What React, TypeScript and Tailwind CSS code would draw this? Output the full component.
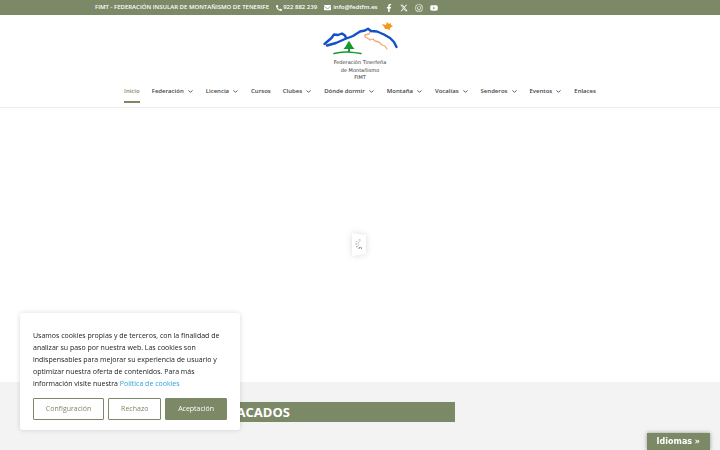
import { ChevronDown } from "lucide-react";
import { FaEnvelope, FaFacebookF, FaInstagram, FaPhoneAlt, FaYoutube } from "react-icons/fa";
import { FaXTwitter } from "react-icons/fa6";

const navLinks = [
  { name: "Inicio", href: "#inicio", active: true },
  { name: "Federación", href: "#federacion", menu: true },
  { name: "Licencia", href: "#licencia", menu: true },
  { name: "Cursos", href: "#cursos" },
  { name: "Clubes", href: "#clubes", menu: true },
  { name: "Dónde dormir", href: "#donde-dormir", menu: true },
  { name: "Montaña", href: "#montana", menu: true },
  { name: "Vocalías", href: "#vocalias", menu: true },
  { name: "Senderos", href: "#senderos", menu: true },
  { name: "Eventos", href: "#eventos", menu: true },
  { name: "Enlaces", href: "#enlaces" },
];

const socials = [
  { name: "Facebook", icon: FaFacebookF },
  { name: "X", icon: FaXTwitter },
  { name: "Instagram", icon: FaInstagram },
  { name: "YouTube", icon: FaYoutube },
];

function TopBar() {
  return (
    <div className="bg-[#7c8967] text-white">
      <div className="mx-auto flex h-[15px] w-full max-w-[530px] items-center text-[6px] leading-[15px] font-semibold whitespace-nowrap">
        <span>FIMT - FEDERACIÓN INSULAR DE MONTAÑISMO DE TENERIFE</span>
        <a href="tel:922882239" className="ml-[7px] flex items-center gap-px">
          <FaPhoneAlt size={6} />
          922 882 239
        </a>
        <a href="mailto:info@fedtfm.es" className="ml-[7px] flex items-center gap-0.5">
          <FaEnvelope size={7} />
          info@fedtfm.es
        </a>
        <div className="ml-[7px] flex items-center gap-[7px]">
          {socials.map((s) => (
            <a key={s.name} href="#social" aria-label={s.name}>
              <s.icon size={8} />
            </a>
          ))}
        </div>
      </div>
    </div>
  );
}

function Logo() {
  return (
    <svg viewBox="0 0 80 62" className="h-[62px] w-20" fill="none" strokeLinecap="round" strokeLinejoin="round" role="img" aria-label="Federación Tinerfeña de Montañismo">
      {/* sol */}
      <path d="M62 5l4 1 1-3 2 2 2-1 0 2 2 1-3 2 0 2-3-1-2 0-1-2z" fill="#f39a1e" />
      {/* barranco */}
      <path d="M50 13l-1 2-4 1 0 2 4 2 1 1 3-1 2 2 4 1 3 3 3 1 2 3" stroke="#efa878" strokeWidth="1.3" />
      {/* montañas */}
      <path d="M4.500 25l7-6 2.500-3.500 4 .5 4-1.500 3 2 1 2.500M7 26.500l9-2.500 9-4 8-3 7-4.500 5-1 3-1.700 3 2.200 6 .5 7 3 6 3.500 4 4 2.500 5" stroke="#1450c8" strokeWidth="2.400" />
      {/* pino */}
      <path d="M29 22l2 2.500h-.7l2 2h-.7l3 3.500h-4.600v3h-2v-3h-4.600l3-3.500h-.7l2-2H27z" fill="#159a2c" />
      <path d="M14 34.500q7-2 14-1.500t13 1.500" stroke="#159a2c" strokeWidth="1.500" />
      <g fill="#333" fontFamily="'DejaVu Sans', sans-serif" fontSize="5" textAnchor="middle">
        <text x="40" y="45">Federación Tinerfeña</text>
        <text x="40" y="53">de Montañismo</text>
        <text x="40" y="60">FIMT</text>
      </g>
    </svg>
  );
}

function Header() {
  return (
    <header className="flex flex-col items-center border-b border-[#ececec] bg-white pt-1 pb-1">
      <a href="#inicio">
        <Logo />
      </a>
      <nav className="flex gap-3 pt-1 text-[6px] font-semibold whitespace-nowrap text-[#444]">
        {navLinks.map((link) => (
          <a
            key={link.name}
            href={link.href}
            className={`flex h-[18px] items-start gap-[3px] border-b-2 leading-[13px] ${
              link.active ? "border-[#7c8967] text-[#7c8967]" : "border-transparent"
            }`}
          >
            {link.name}
            {link.menu && <ChevronDown size={7} strokeWidth={3} className="mt-[3px]" />}
          </a>
        ))}
      </nav>
    </header>
  );
}

function Loader() {
  return (
    <svg viewBox="0 0 17 24" className="h-6 w-[17px] drop-shadow-[0_0_3px_rgba(0,0,0,0.15)]" fill="none" strokeLinecap="round" role="img" aria-label="Cargando">
      <path d="M0 0l14 2v19l-14 2z" fill="#fff" />
      <g stroke="#777">
        <path d="M7 7l1-.3" opacity=".5" />
        <path d="M4.500 8.300l.6.600" opacity=".6" />
        <path d="M3.700 11h.9" opacity=".7" />
        <path d="M4.600 13.800l.7-.5" />
        <path d="M7 15.600l.3-1.200" />
        <path d="M9.500 15.500l-.6-1.200" />
        <path d="M8.500 7.500q-3 1-2 5" stroke="#bbb" strokeWidth=".6" />
      </g>
    </svg>
  );
}

function CookieNotice() {
  return (
    <section
      aria-label="Aviso de cookies"
      className="fixed bottom-5 left-5 w-[220px] rounded-[3px] bg-white px-[13px] pt-[17px] pb-[10px] shadow-[0_0_5px_rgba(0,0,0,0.15)]"
    >
      <p className="text-[7px] leading-3 text-[#212121]">
        Usamos cookies propias y de terceros, con la finalidad de analizar su paso por nuestra web. Las cookies son
        indispensables para mejorar su experiencia de usuario y optimizar nuestra oferta de contenidos. Para más
        información visite nuestra{" "}
        <a href="#cookies" className="text-[#2ea3d8]">
          Política de cookies
        </a>
      </p>
      <div className="mt-2 flex gap-1 text-[7px] leading-[20px] text-[#7c8967]">
        <button className="grow rounded-[1px] border border-[#7c8967] px-[11px]">Configuración</button>
        <button className="grow rounded-[1px] border border-[#7c8967] px-[11px]">Rechazo</button>
        <button className="grow rounded-[1px] border border-[#7c8967] bg-[#7c8967] px-[11px] text-white">Aceptación</button>
      </div>
    </section>
  );
}

export default function App() {
  return (
    <div className="flex min-h-screen flex-col bg-white font-['Open_Sans',sans-serif]">
      <TopBar />
      <Header />
      <main className="flex grow flex-col">
        <div className="flex grow items-center justify-center">
          <Loader />
        </div>
        <section className="bg-[#f3f3f3] pt-5 pb-7">
          <div className="mx-auto w-full max-w-[530px]">
            <h2 className="w-[68%] bg-[#7c8967] pl-[110px] text-[13px] leading-5 font-bold text-white">DESTACADOS</h2>
          </div>
        </section>
      </main>
      <CookieNotice />
      <button className="fixed right-2.5 bottom-0 bg-[#7c8967] px-2.5 font-['DejaVu_Sans',sans-serif] text-[8px] leading-[17px] font-bold text-white shadow-[0_0_4px_rgba(0,0,0,0.4)]">
        Idiomas »
      </button>
    </div>
  );
}
